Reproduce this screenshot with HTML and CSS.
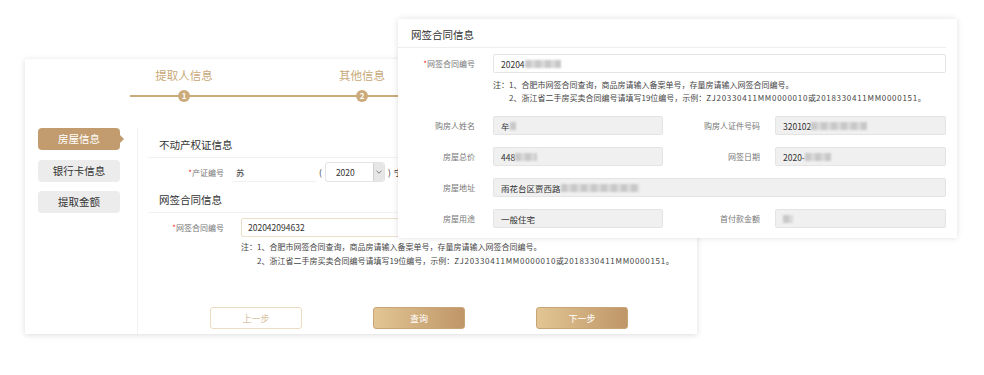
FILE: index.html
```html
<!DOCTYPE html>
<html lang="zh-CN">

<head>
    <meta charset="UTF-8">
    <title>房屋信息</title>
    <link rel="stylesheet" href="styles.css">
</head>

<body>
    <div class="stage">
        <div class="panel">
            <div class="steps">
                <div class="step"><span class="step-name">提取人信息</span><span class="step-dot">1</span></div>
                <div class="step"><span class="step-name">其他信息</span><span class="step-dot">2</span></div>
            </div>
            <div class="panel-body">
                <div class="side">
                    <div class="tab active">房屋信息</div>
                    <div class="tab">银行卡信息</div>
                    <div class="tab">提取金额</div>
                </div>
                <div class="content">
                    <div class="section-title">不动产权证信息</div>
                    <div class="field">
                        <label class="field-label"><i>*</i>产证编号</label>
                        <span class="plain-input">苏</span>
                        <span class="paren">(</span>
                        <span class="select">
                            <span class="select-value">2020</span>
                            <span class="select-btn">
                                <svg width="6" height="4" viewBox="0 0 6 4"><path d="M0.5 0.8 L3 3.2 L5.5 0.8" fill="none" stroke="#777" stroke-width="0.9"/></svg>
                            </span>
                        </span>
                        <span class="paren">)</span>
                        <span class="paren">宁</span>
                    </div>
                    <div class="section-title">网签合同信息</div>
                    <div class="field field-contract">
                        <label class="field-label"><i>*</i>网签合同编号</label>
                        <span class="text-input">202042094632</span>
                    </div>
                    <div class="note">
                        <div>注：1、合肥市网签合同查询，商品房请输入备案单号，存量房请输入网签合同编号。</div>
                        <div class="note-indent">2、浙江省二手房买卖合同编号请填写19位编号，示例：<span class="code">ZJ20330411MM0000010</span>或<span class="code">2018330411MM0000151</span>。</div>
                    </div>
                    <div class="actions">
                        <button class="btn btn-ghost">上一步</button>
                        <button class="btn btn-gold">查询</button>
                        <button class="btn btn-gold">下一步</button>
                    </div>
                </div>
            </div>
        </div>

        <div class="overlay">
            <div class="ov-title">网签合同信息</div>
            <div class="ov-row">
                <label class="ov-label"><i>*</i>网签合同编号</label>
                <span class="ov-input ov-wide ov-white">20204<span class="mask" style="width:36px"></span></span>
            </div>
            <div class="ov-note">
                <div>注：1、合肥市网签合同查询，商品房请输入备案单号，存量房请输入网签合同编号。</div>
                <div class="note-indent">2、浙江省二手房买卖合同编号请填写19位编号，示例：<span class="code">ZJ20330411MM0000010</span>或<span class="code">2018330411MM0000151</span>。</div>
            </div>
            <div class="ov-grid">
                <div class="ov-row">
                    <label class="ov-label">购房人姓名</label>
                    <span class="ov-input">牟<span class="mask" style="width:6px"></span></span>
                    <label class="ov-label ov-label-2">购房人证件号码</label>
                    <span class="ov-input ov-input-2">320102<span class="mask" style="width:56px"></span></span>
                </div>
                <div class="ov-row">
                    <label class="ov-label">房屋总价</label>
                    <span class="ov-input">448<span class="mask" style="width:22px"></span></span>
                    <label class="ov-label ov-label-2">网签日期</label>
                    <span class="ov-input ov-input-2">2020-<span class="mask" style="width:26px"></span></span>
                </div>
                <div class="ov-row">
                    <label class="ov-label">房屋地址</label>
                    <span class="ov-input ov-wide">雨花台区贾西路<span class="mask" style="width:78px"></span></span>
                </div>
                <div class="ov-row">
                    <label class="ov-label">房屋用途</label>
                    <span class="ov-input">一般住宅</span>
                    <label class="ov-label ov-label-2">首付款金额</label>
                    <span class="ov-input ov-input-2"><span class="mask" style="width:10px"></span></span>
                </div>
            </div>
        </div>
    </div>
</body>

</html>
```

FILE: styles.css
```css
body {
    margin: 0;
    background: #fff;
    font-family: "Noto Sans CJK SC", "Noto Sans", sans-serif;
    color: #333;
}

.stage {
    position: relative;
    width: 984px;
    height: 375px;
    padding: 59px 0 0 25px;
    box-sizing: border-box;
    overflow: hidden;
}

.panel {
    width: 672px;
    height: 275px;
    background: #fff;
    box-shadow: 0 1px 6px rgba(0, 0, 0, 0.14);
}

/* steps */
.steps {
    display: flex;
    margin-left: 70px;
    padding-top: 9px;
    background: linear-gradient(#cbab7b, #cbab7b) no-repeat 35px 36px / 100% 2px;
}

.step {
    width: 178px;
    display: flex;
    flex-direction: column;
    align-items: center;
}

.step-name {
    font-size: 11.5px;
    line-height: 14px;
    color: #c8a878;
}

.step-dot {
    margin-top: 8px;
    width: 12px;
    height: 12px;
    border-radius: 50%;
    background: #cbab7b;
    color: #fff;
    font-size: 8px;
    font-weight: bold;
    line-height: 12px;
    text-align: center;
}

.panel-body {
    display: flex;
    margin-top: 26px;
}

/* side tabs */
.side {
    margin-left: 13px;
    width: 82px;
    display: flex;
    flex-direction: column;
    gap: 9.5px;
}

.tab {
    position: relative;
    height: 22px;
    line-height: 22px;
    border-radius: 4px;
    background: #ececec;
    color: #333;
    font-size: 10.5px;
    text-align: center;
}

.tab.active {
    background: #c29c6e;
    color: #fff;
}

.tab.active::after {
    content: "";
    position: absolute;
    right: -4px;
    top: 7px;
    border-left: 4px solid #c29c6e;
    border-top: 4px solid transparent;
    border-bottom: 4px solid transparent;
}

/* content */
.content {
    flex: 1;
    height: 206px;
    margin-left: 17px;
    padding-left: 10px;
    border-left: 1px solid #f0f0f0;
}

.section-title {
    margin-right: 14px;
    padding: 10px 0 5px 11px;
    font-size: 10.5px;
    line-height: 14px;
    border-bottom: 1px solid #f2f2f2;
}

.field {
    display: flex;
    align-items: center;
    height: 20px;
    margin: 4px 0 1px;
    font-size: 8.5px;
}

.field-label {
    width: 76px;
    text-align: right;
    font-size: 8px;
    color: #777;
}

.field-label i,
.ov-label i {
    font-style: normal;
    color: #e33;
}

.plain-input {
    width: 84px;
    height: 19px;
    line-height: 19px;
    margin-left: 8px;
    padding-left: 4px;
    border-bottom: 1px solid #f0f0f0;
    box-sizing: border-box;
}

.paren {
    margin-left: 3px;
    font-size: 8.5px;
}

.select {
    display: flex;
    width: 60px;
    height: 20px;
    margin-left: 3px;
    border: 1px solid #e3e3e3;
    border-radius: 3px;
    box-sizing: border-box;
    overflow: hidden;
}

.select-value {
    flex: 1;
    line-height: 18px;
    padding-left: 10px;
}

.select-btn {
    width: 10px;
    background: #e6e6e6;
    border-left: 1px solid #d0d0d0;
    display: flex;
    align-items: center;
    justify-content: center;
}

.field-contract {
    margin-top: 5px;
    height: 19px;
}

.text-input {
    width: 400px;
    height: 19px;
    line-height: 17px;
    margin-left: 17px;
    padding-left: 6px;
    border: 1px solid #ecdfc8;
    border-radius: 2px;
    box-sizing: border-box;
}

.note {
    margin: 3px 0 0 93px;
    font-size: 8px;
    line-height: 14px;
    color: #444;
    white-space: nowrap;
}

.note-indent {
    padding-left: 16px;
}

.code {
    letter-spacing: 0.7px;
}

.actions {
    display: flex;
    justify-content: center;
    gap: 71px;
    margin-top: 39px;
    padding-right: 7px;
}

.btn {
    width: 92px;
    height: 22px;
    border-radius: 3px;
    font-family: inherit;
    font-size: 9px;
    padding: 0;
}

.btn-ghost {
    background: #fff;
    border: 1px solid #ecdcc0;
    color: #d8c29f;
}

.btn-gold {
    background: linear-gradient(to right, #e2c593, #bf9668);
    border: 1px solid #c8a476;
    color: #fff;
}

/* overlay card */
.overlay {
    position: absolute;
    left: 398px;
    top: 19px;
    width: 559px;
    height: 219px;
    background: #fff;
    box-shadow: 0 0 6px rgba(0, 0, 0, 0.13);
}

.ov-title {
    margin-right: 11px;
    padding: 9px 0 5px 13px;
    font-size: 10.5px;
    line-height: 14px;
    border-bottom: 1px solid #eee;
}

.ov-row {
    display: flex;
    align-items: center;
    margin-top: 6px;
}

.ov-label {
    width: 77px;
    text-align: right;
    font-size: 8px;
    color: #777;
    white-space: nowrap;
}

.ov-input {
    display: flex;
    align-items: center;
    width: 170px;
    height: 19px;
    margin-left: 18px;
    padding-left: 7px;
    border: 1px solid #e4e4e4;
    border-radius: 2px;
    background: #f0f0f0;
    font-size: 8.5px;
    box-sizing: border-box;
}

.ov-wide {
    width: 453px;
}

.ov-white {
    background: #fff;
}

.ov-label-2 {
    width: 97px;
}

.ov-input-2 {
    width: 171px;
    margin-left: 15px;
}

.ov-note {
    margin: 5px 0 0 95px;
    font-size: 8px;
    line-height: 13px;
    color: #444;
    white-space: nowrap;
}

.ov-grid {
    margin-top: 4px;
}

.ov-grid .ov-row {
    margin-top: 12px;
}

.mask {
    display: inline-block;
    height: 8px;
    background: repeating-linear-gradient(to right, #c8c8c8 0 6px, #dadada 6px 10px);
    filter: blur(1px);
}
```
